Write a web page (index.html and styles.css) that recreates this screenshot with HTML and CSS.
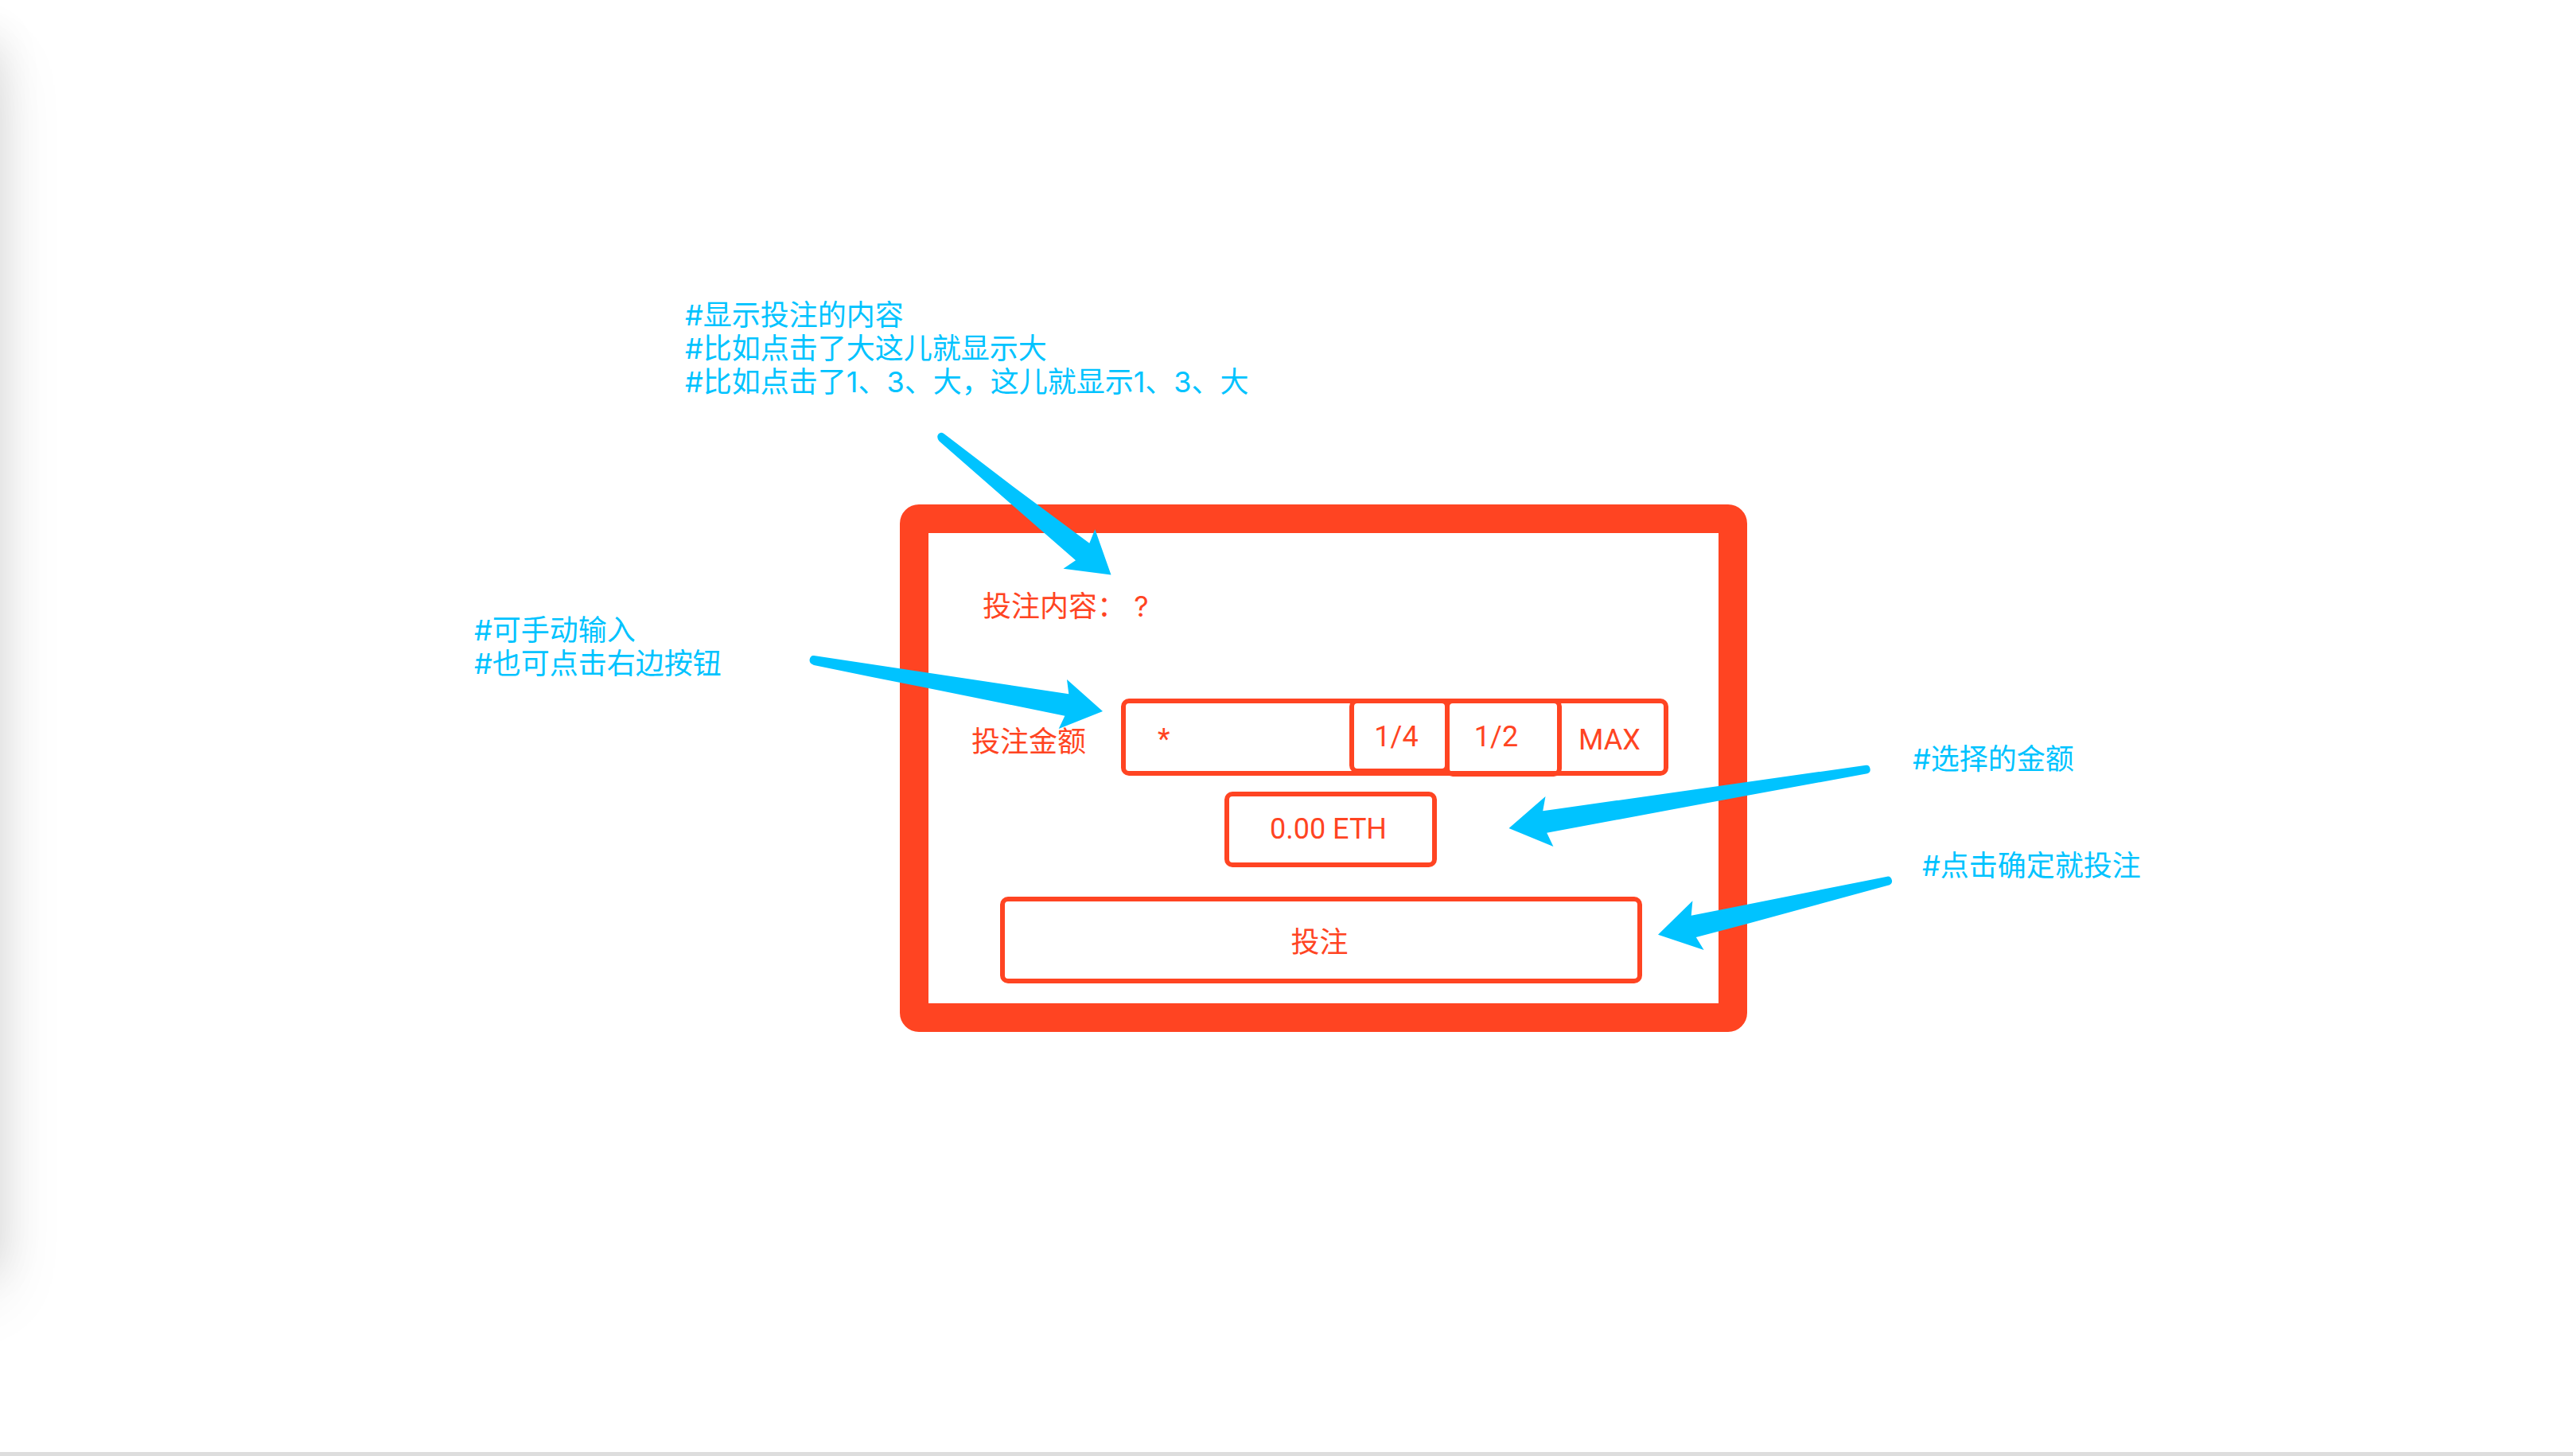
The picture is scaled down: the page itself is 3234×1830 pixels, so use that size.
FILE: index.html
```html
<!DOCTYPE html>
<html lang="zh-CN">
<head>
<meta charset="utf-8">
<title>投注</title>
<link rel="stylesheet" href="styles.css">
</head>
<body>
<main class="board">
  <p class="note note-content">#显示投注的内容<br>#比如点击了大这儿就显示大<br>#比如点击了1、3、大，这儿就显示1、3、大</p>
  <p class="note note-input">#可手动输入<br>#也可点击右边按钮</p>
  <form class="panel">
    <p class="content-row">投注内容： ?</p>
    <div class="amount-row">
      <label class="amount-label" for="amount">投注金额</label>
      <div class="amount-group">
        <input class="amount-input" id="amount" type="text" value="*">
        <button class="part quarter" type="button">1/4</button>
        <button class="part half" type="button">1/2</button>
        <button class="max" type="button">MAX</button>
      </div>
    </div>
    <output class="total" for="amount">0.00 ETH</output>
    <button class="submit" type="button">投注</button>
    <svg class="arrow arrow-content" width="220" height="181" viewBox="1177 542 220 181" aria-hidden="true"><path d="M1187 545.500L1278 615L1369.300 682.700L1376.300 665.300L1396.500 722.500L1336.500 714.700L1352 704.300L1268.800 631.700L1180.500 554.500Q1176.500 549.500 1179.500 545.500Q1183 541.800 1187 545.500Z"/></svg>
    <svg class="arrow arrow-input" width="370" height="94" viewBox="1017 823 370 94" aria-hidden="true"><path d="M1023 824L1169 846L1343.300 872.300L1341 854L1386 894L1330.700 916L1338.400 899.700L1167 865Q1095 851 1023 836Q1017.500 834 1017.500 829.500Q1018.500 823.500 1023 824Z"/></svg>
    <svg class="arrow arrow-total" width="455" height="104" viewBox="1896 961 455 104" aria-hidden="true"><path d="M2345.500 961.700L2160 988L1939.200 1019.300L1942.500 1001L1896.500 1041L1952.400 1064L1944.200 1046.700L2195.400 1000L2347 972.300Q2351 971 2350.700 967Q2350 961.300 2345.500 961.700Z"/></svg>
    <svg class="arrow arrow-submit" width="295" height="94" viewBox="2084 1101 295 94" aria-hidden="true"><path d="M2372 1101.700L2160 1144L2125.700 1150.700L2127.400 1132.300L2084 1174.700L2141.600 1194L2131.800 1178L2195.400 1161.300L2375 1112.200Q2378.600 1110.500 2378 1106.500Q2376.500 1101 2372 1101.700Z"/></svg>
  </form>
  <aside class="side-notes">
    <p class="note">#选择的金额</p>
    <p class="note note-submit">#点击确定就投注</p>
  </aside>
</main>
</body>
</html>
```
FILE: styles.css
```css
* {
  box-sizing: border-box;
}

body {
  position: relative;
  min-height: 100vh;
  margin: 0;
  border-bottom: 5px solid #ddd;
  background: #fff;
  color: #ff4422;
  font: 36px/42px Inter, "Noto Sans CJK SC", sans-serif;
}

/* shadow cast by the neighbouring window past the left edge */
body::before {
  content: "";
  position: absolute;
  top: 46px;
  bottom: 230px;
  left: -200px;
  width: 200px;
  box-shadow: 0 0 50px rgba(0, 0, 0, 0.1), 0 30px 84px rgba(0, 0, 0, 0.1);
}

p {
  margin: 0;
}

input,
button {
  margin: 0;
  padding: 0;
  border: 0;
  background: none;
  color: inherit;
  font: inherit;
}

.board {
  display: grid;
  grid-template-columns:
    minmax(0, 596fr) minmax(0, 265fr) minmax(0, 270fr)
    minmax(0, 1065fr) minmax(0, 208fr) minmax(0, 830fr);
  row-gap: 133px;
  align-items: start;
  padding-top: 375px;
}

.note {
  color: #00c3ff;
  white-space: nowrap;
}

.note-content {
  grid-column: 3 / -1;
}

.note-input {
  grid-column: 2 / 4;
  grid-row: 2;
  padding-top: 137px;
}

.side-notes {
  display: flex;
  grid-column: 6;
  grid-row: 2;
  flex-direction: column;
  gap: 92px;
  padding-top: 299px;
}

.note-submit {
  padding-left: 12px;
}

.panel {
  position: relative;
  display: flex;
  grid-column: 4;
  grid-row: 2;
  flex-direction: column;
  padding: 71px 0 25px;
  border: 36px solid #ff4422;
  border-radius: 24px;
}

.content-row {
  padding-left: 68px;
}

.amount-row {
  display: flex;
  align-items: center;
  margin-top: 95px;
  padding: 0 63px 0 54px;
}

.amount-label {
  flex: none;
  width: 188px;
  padding-top: 10px;
}

.amount-group {
  display: flex;
  flex: 1;
  align-items: flex-start;
  min-width: 0;
  height: 97px;
  border: 6px solid;
  border-radius: 10px;
}

.amount-input {
  flex: 1;
  min-width: 0;
  height: 85px;
  padding: 4px 0 0 40px;
}

.amount-group,
.total {
  font-family: Roboto, sans-serif;
}

.part {
  margin-top: -6px;
  border: 6px solid;
  border-radius: 10px;
}

.quarter {
  width: 126px;
  height: 94px;
  padding: 2px 8px 0 0;
}

.half {
  width: 147px;
  height: 98px;
  margin-left: -6px;
  padding: 0 18px 2px 0;
}

.max {
  width: 128px;
  height: 85px;
  padding: 6px 8px 0 0;
}

.total {
  display: grid;
  place-items: center;
  align-self: flex-start;
  width: 267px;
  height: 95px;
  margin: 20px 0 0 372px;
  padding: 0 6px 2px 0;
  border: 6px solid;
  border-radius: 10px;
}

.submit {
  height: 109px;
  margin: 37px 96px 0 90px;
  padding: 4px 4px 0 0;
  border: 6px solid;
  border-radius: 10px;
}

/* arrows lie over the panel frame and point into it */
.arrow {
  position: absolute;
  fill: #00c3ff;
}

.arrow-content {
  top: -128px;
  left: 10px;
}

.arrow-input {
  top: 153px;
  left: -150px;
}

.arrow-total {
  top: 291px;
  right: -191px;
}

.arrow-submit {
  top: 431px;
  right: -219px;
}
```
